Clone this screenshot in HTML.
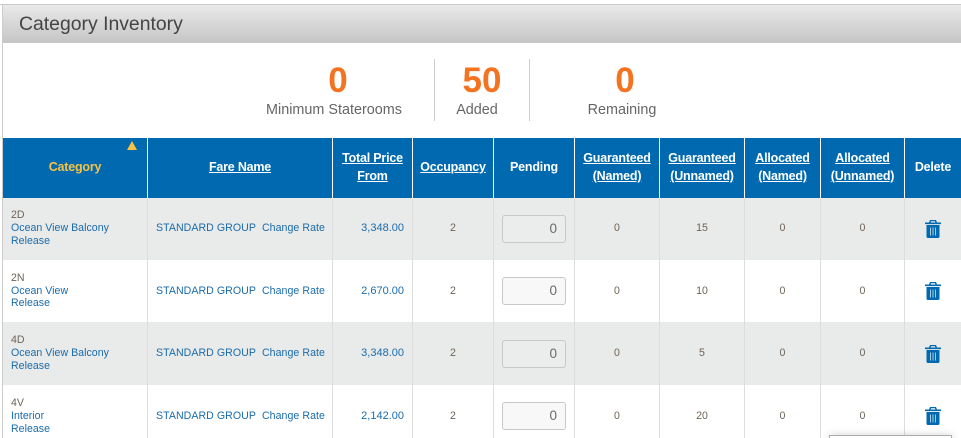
<!DOCTYPE html>
<html><head><meta charset="utf-8">
<style>
html,body{margin:0;padding:0;background:#fff;overflow:hidden;height:438px}
body{width:961px;position:relative;font-family:"Liberation Sans",sans-serif;color:#6a6058}
.a{position:absolute}
#top{left:0;top:4px;width:961px;height:1px;background:#c9c9c9}
#left{left:2px;top:5px;width:1px;height:433px;background:#ccc}
#bar{left:3px;top:5px;width:958px;height:38px;background:linear-gradient(#e9e9e9,#c5c5c5)}
#title{left:19px;top:12px;font-size:19.4px;line-height:24px;color:#444;white-space:nowrap}
.num{font-size:35px;line-height:36px;font-weight:bold;color:#f47321;text-align:center;top:63px;width:100px}
.lab{font-size:14.4px;line-height:18px;color:#666;text-align:center;top:101px;width:180px;white-space:nowrap}
.div{width:1px;top:59px;height:62px;background:#ccc}
table{position:absolute;left:3px;top:138px;border-collapse:separate;border-spacing:0;table-layout:fixed;width:958px}
th{background:#0069b0;color:#fff;font-size:12.5px;line-height:18px;height:60px;padding:0 0 2px;box-sizing:border-box;border-right:1px solid #fff;font-weight:bold;text-align:center;vertical-align:middle;letter-spacing:-.2px}
th a{color:#fff;text-decoration:underline}
th.last{border-right:0}
th.cat{color:#f6c244;position:relative}
th.cat i{position:absolute;right:10px;top:3px;width:0;height:0;border-left:5px solid transparent;border-right:5px solid transparent;border-bottom:9px solid #f6c244}
td{font-size:10.6px;line-height:12.7px;padding:0;border-right:1px solid #ddd;text-align:center;vertical-align:middle;color:#6f6357}
td.last{border-right:0}
tr.g td{background:#e9eaea}
tr.r1 td,tr.r2 td{height:62px}
tr.r3 td{height:63px}
tr.r4 td{height:61px}
tr.r1 td.t{padding-bottom:1px;height:61px}
tr.r4 td.t{padding-top:2px;height:59px}
td.c{text-align:left;padding-left:8px;letter-spacing:.02px}
td.f{text-align:left;padding-left:8px;white-space:nowrap;letter-spacing:.05px}
td.p{text-align:right;padding-right:8px;font-size:11px}
.l{color:#1a6cab}
td.l{color:#1a6cab}
.in{display:block;box-sizing:border-box;width:64px;height:28px;margin:0 0 0 8px;border:1px solid #c8c8c8;border-radius:3px;font-size:13.5px;line-height:26px;text-align:right;padding-right:8px;color:#6a6a6a;background:#f8f8f8}
tr.g .in{background:#ebecec}
svg{display:block;margin:0 auto}
#pop{left:829px;top:435px;width:121px;height:10px;background:#fff;border:1px solid #aaa;box-shadow:0 0 8px rgba(0,0,0,.18)}
</style></head>
<body>
<div class="a" id="top"></div>
<div class="a" id="bar"></div>
<div class="a" id="left"></div>
<div class="a" id="title">Category Inventory</div>

<div class="a num" style="left:288px">0</div>
<div class="a lab" style="left:244px">Minimum Staterooms</div>
<div class="a div" style="left:434px"></div>
<div class="a num" style="left:432px">50</div>
<div class="a lab" style="left:387px">Added</div>
<div class="a div" style="left:529px"></div>
<div class="a num" style="left:575px">0</div>
<div class="a lab" style="left:532px">Remaining</div>

<table>
<colgroup><col style="width:145px"><col style="width:185px"><col style="width:80px"><col style="width:81px"><col style="width:81px"><col style="width:85px"><col style="width:85px"><col style="width:76px"><col style="width:84px"><col style="width:56px"></colgroup>
<tr>
<th class="cat">Category<i></i></th>
<th><a>Fare Name</a></th>
<th><a>Total Price<br>From</a></th>
<th><a>Occupancy</a></th>
<th>Pending</th>
<th><a>Guaranteed<br>(Named)</a></th>
<th><a>Guaranteed<br>(Unnamed)</a></th>
<th><a>Allocated<br>(Named)</a></th>
<th><a>Allocated<br>(Unnamed)</a></th>
<th class="last">Delete</th>
</tr>
<tr class="g r1">
<td class="c t">2D<br><span class="l">Ocean View Balcony<br>Release</span></td>
<td class="f l t">STANDARD GROUP&nbsp; Change Rate</td>
<td class="p l t">3,348.00</td><td class="t">2</td><td><span class="in">0</span></td><td class="t">0</td><td class="t">15</td><td class="t">0</td><td class="t">0</td>
<td class="last"><svg width="16" height="18" viewBox="0 0 16 18"><path fill="#0069b0" d="M5 0h6l1 2.500h4v1.600H0V2.500h4zM6 1.200l-.4 1.300h4.800L10 1.200zM1.500 5h13v11.500q0 1.500-1.500 1.500H3q-1.500 0-1.500-1.500z"/><path stroke="#a9cbe3" stroke-width="1" d="M5.500 7.500v8M8 7.500v8M10.500 7.500v8"/></svg></td>
</tr>
<tr class="r2">
<td class="c">2N<br><span class="l">Ocean View<br>Release</span></td>
<td class="f l">STANDARD GROUP&nbsp; Change Rate</td>
<td class="p l">2,670.00</td><td>2</td><td><span class="in">0</span></td><td>0</td><td>10</td><td>0</td><td>0</td>
<td class="last"><svg width="16" height="18" viewBox="0 0 16 18"><path fill="#0069b0" d="M5 0h6l1 2.500h4v1.600H0V2.500h4zM6 1.200l-.4 1.300h4.800L10 1.200zM1.500 5h13v11.500q0 1.500-1.500 1.500H3q-1.500 0-1.500-1.500z"/><path stroke="#a9cbe3" stroke-width="1" d="M5.500 7.500v8M8 7.500v8M10.500 7.500v8"/></svg></td>
</tr>
<tr class="g r3">
<td class="c">4D<br><span class="l">Ocean View Balcony<br>Release</span></td>
<td class="f l">STANDARD GROUP&nbsp; Change Rate</td>
<td class="p l">3,348.00</td><td>2</td><td><span class="in">0</span></td><td>0</td><td>5</td><td>0</td><td>0</td>
<td class="last"><svg width="16" height="18" viewBox="0 0 16 18"><path fill="#0069b0" d="M5 0h6l1 2.500h4v1.600H0V2.500h4zM6 1.200l-.4 1.300h4.800L10 1.200zM1.500 5h13v11.500q0 1.500-1.500 1.500H3q-1.500 0-1.500-1.500z"/><path stroke="#a9cbe3" stroke-width="1" d="M5.500 7.500v8M8 7.500v8M10.500 7.500v8"/></svg></td>
</tr>
<tr class="r4">
<td class="c t">4V<br><span class="l">Interior<br>Release</span></td>
<td class="f l t">STANDARD GROUP&nbsp; Change Rate</td>
<td class="p l t">2,142.00</td><td class="t">2</td><td><span class="in">0</span></td><td class="t">0</td><td class="t">20</td><td class="t">0</td><td class="t">0</td>
<td class="last"><svg width="16" height="18" viewBox="0 0 16 18"><path fill="#0069b0" d="M5 0h6l1 2.500h4v1.600H0V2.500h4zM6 1.200l-.4 1.300h4.800L10 1.200zM1.500 5h13v11.500q0 1.500-1.500 1.500H3q-1.500 0-1.500-1.500z"/><path stroke="#a9cbe3" stroke-width="1" d="M5.500 7.500v8M8 7.500v8M10.500 7.500v8"/></svg></td>
</tr>
</table>
<div class="a" id="pop"></div>
</body></html>
